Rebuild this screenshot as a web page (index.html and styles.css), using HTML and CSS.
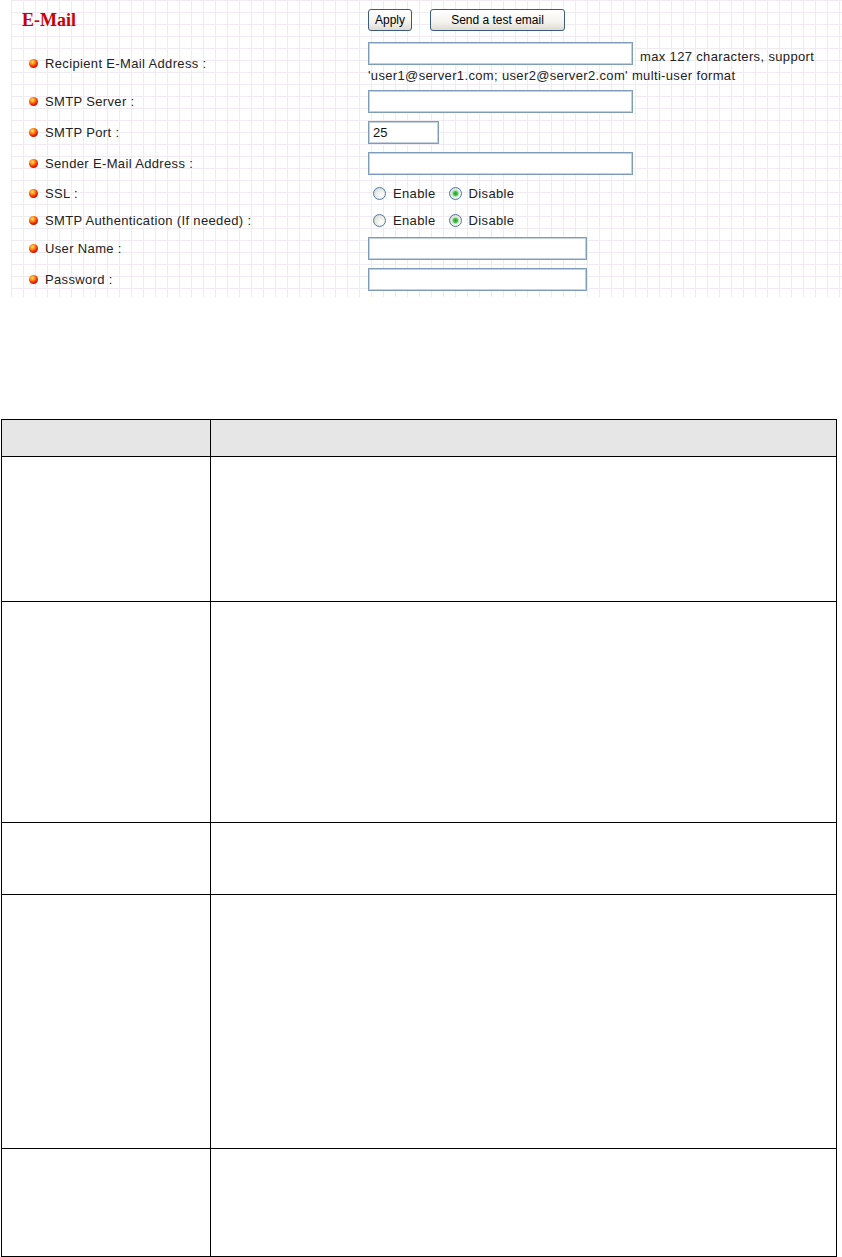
FILE: index.html
```html
<!DOCTYPE html>
<html lang="en">
<head>
    <meta charset="UTF-8">
    <meta name="viewport" content="width=device-width, initial-scale=1.0">
    <title>E-Mail</title>
    <link rel="stylesheet" href="styles.css">
</head>
<body>
    <div class="panel">
        <div class="row head">
            <div class="label"><span class="title">E-Mail</span></div>
            <div class="field">
                <button type="button" class="btn apply">Apply</button>
                <button type="button" class="btn test">Send a test email</button>
            </div>
        </div>
        <div class="row tall">
            <div class="label"><span class="dot"></span>Recipient E-Mail Address :</div>
            <div class="field">
                <div class="line">
                    <input type="text" class="box long">
                    <span class="hint">max 127 characters, support</span>
                </div>
                <div class="hint second">'user1@server1.com; user2@server2.com' multi-user format</div>
            </div>
        </div>
        <div class="row">
            <div class="label"><span class="dot"></span>SMTP Server :</div>
            <div class="field"><input type="text" class="box long"></div>
        </div>
        <div class="row">
            <div class="label"><span class="dot"></span>SMTP Port :</div>
            <div class="field"><input type="text" class="box port" value="25"></div>
        </div>
        <div class="row">
            <div class="label"><span class="dot"></span>Sender E-Mail Address :</div>
            <div class="field"><input type="text" class="box long"></div>
        </div>
        <div class="row radios">
            <div class="label"><span class="dot"></span>SSL :</div>
            <div class="field">
                <label class="opt"><input type="radio" name="ssl">Enable</label>
                <label class="opt"><input type="radio" name="ssl" checked>Disable</label>
            </div>
        </div>
        <div class="row radios short">
            <div class="label"><span class="dot"></span>SMTP Authentication (If needed) :</div>
            <div class="field">
                <label class="opt"><input type="radio" name="auth">Enable</label>
                <label class="opt"><input type="radio" name="auth" checked>Disable</label>
            </div>
        </div>
        <div class="row">
            <div class="label"><span class="dot"></span>User Name :</div>
            <div class="field"><input type="text" class="box mid"></div>
        </div>
        <div class="row">
            <div class="label"><span class="dot"></span>Password :</div>
            <div class="field"><input type="password" class="box mid"></div>
        </div>
    </div>

    <table class="desc">
        <tr class="r0"><th class="c1"></th><th></th></tr>
        <tr class="r1"><td></td><td></td></tr>
        <tr class="r2"><td></td><td></td></tr>
        <tr class="r3"><td></td><td></td></tr>
        <tr class="r4"><td></td><td></td></tr>
        <tr class="r5"><td></td><td></td></tr>
    </table>
</body>
</html>
```

FILE: styles.css
```css
body {
    margin: 0;
    background-color: #ffffff;
    color: #222222;
    font-family: 'Liberation Sans', Arial, sans-serif;
    font-size: 13px;
}
.panel {
    margin-left: 11px;
    height: 297px;
    box-sizing: border-box;
    padding-bottom: 2px;
    background-color: #ffffff;
    background-image:
        linear-gradient(to right, #f0ebf0 1px, transparent 1px),
        linear-gradient(to bottom, #f0ebf0 1px, transparent 1px);
    background-size: 12px 12px;
}
.row {
    display: flex;
    align-items: center;
    height: 31px;
}
.row.head {
    height: 40px;
}
.row.tall {
    height: 46px;
}
.row.radios {
    height: 28px;
}
.row.radios.short {
    height: 26px;
}
.label {
    flex: none;
    width: 357px;
    box-sizing: border-box;
    padding-left: 18px;
    display: flex;
    align-items: center;
    letter-spacing: 0.35px;
    color: #222222;
}
.head .label {
    padding-left: 11px;
}
.title {
    font-family: 'Liberation Serif', 'Times New Roman', serif;
    font-weight: bold;
    font-size: 18px;
    letter-spacing: 0;
    color: #cc0000;
}
.dot {
    flex: none;
    width: 9px;
    height: 9px;
    border-radius: 50%;
    margin-right: 7px;
    background: radial-gradient(circle at 38% 32%, #ffe27a 0, #ff8a10 30%, #e81800 62%, #a80000 100%);
}
.field {
    display: flex;
    align-items: center;
}
.tall .field {
    flex-direction: column;
    align-items: flex-start;
}
.line {
    display: flex;
    align-items: flex-end;
}
.hint {
    margin-left: 7px;
    line-height: 16px;
    letter-spacing: 0.35px;
}
.hint.second {
    margin-left: 0;
    margin-top: 3px;
}
.box {
    height: 23px;
    box-sizing: border-box;
    margin: 0;
    padding: 0 4px;
    border: 1px solid #7f9db9;
    box-shadow: inset 0 0 0 1px #c3d0df;
    background-color: #ffffff;
    font-family: 'Liberation Sans', Arial, sans-serif;
    font-size: 13px;
    color: #111111;
    outline: none;
}
.long {
    width: 265px;
}
.port {
    width: 71px;
}
.mid {
    width: 219px;
}
.btn {
    height: 22px;
    box-sizing: border-box;
    margin: 0;
    padding: 0;
    border: 1px solid #3d5a80;
    border-radius: 3px;
    background: linear-gradient(#ffffff, #f4f3ee 60%, #dedbd0);
    font-family: 'Liberation Sans', Arial, sans-serif;
    font-size: 12px;
    color: #000000;
}
.apply {
    width: 44px;
}
.test {
    width: 135px;
    margin-left: 18px;
}
.opt {
    display: inline-flex;
    align-items: center;
    letter-spacing: 0.35px;
}
.opt + .opt {
    margin-left: 8px;
}
.opt input {
    appearance: none;
    -webkit-appearance: none;
    width: 13px;
    height: 13px;
    margin: 0 7px 0 5px;
    border: 1px solid #4e7aa8;
    border-radius: 50%;
    background: radial-gradient(circle at 65% 65%, #ffffff 0, #e8e8e2 55%, #cfcfc6 100%);
}
.opt input:checked {
    background:
        radial-gradient(circle, #24a024 0, #48c048 2px, #a8e2a8 3px, transparent 4px),
        radial-gradient(circle at 65% 65%, #ffffff 0, #e8e8e2 55%, #cfcfc6 100%);
}
.desc {
    margin: 122px 0 0 1px;
    width: 836px;
    border-collapse: collapse;
    table-layout: fixed;
}
.desc th,
.desc td {
    border: 1px solid #000000;
    padding: 0;
}
.desc th {
    background-color: #e6e6e6;
}
.desc .c1 {
    width: 208px;
}
.r0 { height: 37px; }
.r1 { height: 145px; }
.r2 { height: 221px; }
.r3 { height: 72px; }
.r4 { height: 254px; }
.r5 { height: 108px; }
```
